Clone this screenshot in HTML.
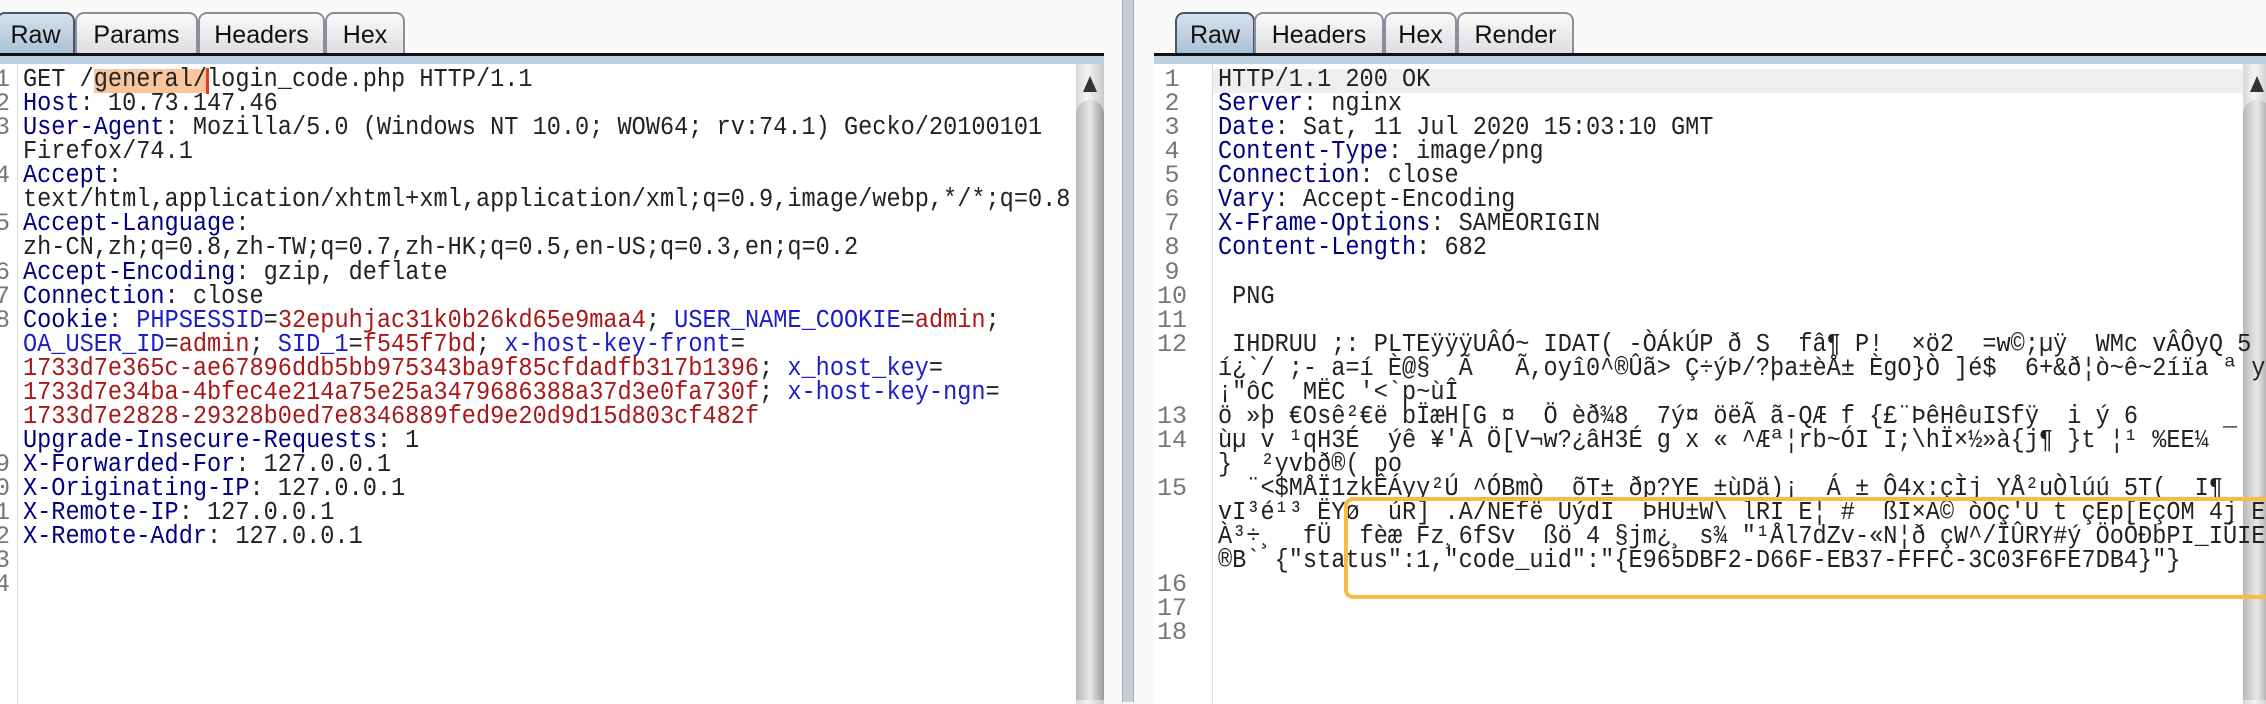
<!DOCTYPE html>
<html><head><meta charset="utf-8"><style>
html,body{margin:0;padding:0}
body{width:2266px;height:702px;background:#fafafa;position:relative;overflow:hidden;font-family:"Liberation Sans",sans-serif}
.tab{position:absolute;top:12px;height:42px;border:2px solid #8a8f99;border-bottom:none;border-radius:9px 9px 0 0;background:linear-gradient(#fafafa,#dcdde0);font-size:25px;line-height:42px;text-align:center;color:#111;box-sizing:border-box}
.tab.sel{background:linear-gradient(#d6e2ee,#a8bed3);border-color:#4b5563;height:44px}
.bar{position:absolute;top:53px;height:3px;background:#111}
.strip{position:absolute;top:56px;height:8px;background:#bccfe3}
.ed{position:absolute;top:64px;height:640px;background:#fff}
.code{position:absolute;font-family:"Liberation Mono",monospace;font-size:25.5px;line-height:24.06px;white-space:pre;color:#222;transform:scaleX(0.925);transform-origin:0 0}
.n{color:#000080}.k{color:#1c1cc8}.v{color:#a81818}
.num{position:absolute;font-family:"Liberation Mono",monospace;font-size:25px;line-height:24.06px;white-space:pre;color:#777;text-align:right}
.sb{position:absolute;top:64px;width:28px;height:640px;background:linear-gradient(90deg,#d8d8d8,#f4f4f4 40%,#c8c8c8)}
.sb:before{content:"";position:absolute;left:7px;top:12px;border-left:7px solid transparent;border-right:7px solid transparent;border-bottom:16px solid #333}
.sb:after{content:"";position:absolute;left:0;top:36px;width:28px;height:600px;background:linear-gradient(90deg,#b8b8b8,#e8e8e8 50%,#9a9a9a);border-radius:14px 14px 0 0}
</style></head><body>
<!-- left panel -->
<div class="ed" style="left:0;width:1104px"></div>
<div style="position:absolute;left:17px;top:64px;width:1px;height:640px;background:#ddd"></div>
<div class="tab sel" style="left:-4px;width:79px">Raw</div>
<div class="tab" style="left:75px;width:123px">Params</div>
<div class="tab" style="left:198px;width:127px">Headers</div>
<div class="tab" style="left:325px;width:80px">Hex</div>
<div class="bar" style="left:0;width:1104px"></div>
<div class="strip" style="left:0;width:1104px"></div>
<div class="sb" style="left:1076px"></div>
<div class="num" style="left:-40px;top:68px;width:50px">1
2
3

4

5

6
7
8





9
10
11
12
13
14</div>
<div style="position:absolute;left:94px;top:69px;width:113px;height:24px;background:#f9c59c"></div>
<div style="position:absolute;left:206px;top:68px;width:3px;height:26px;background:#e04020"></div>
<div class="code" style="left:23px;top:68px">GET /general/login_code.php HTTP/1.1
<span class="n">Host</span>: 10.73.147.46
<span class="n">User-Agent</span>: Mozilla/5.0 (Windows NT 10.0; WOW64; rv:74.1) Gecko/20100101
Firefox/74.1
<span class="n">Accept</span>:
text/html,application/xhtml+xml,application/xml;q=0.9,image/webp,*/*;q=0.8
<span class="n">Accept-Language</span>:
zh-CN,zh;q=0.8,zh-TW;q=0.7,zh-HK;q=0.5,en-US;q=0.3,en;q=0.2
<span class="n">Accept-Encoding</span>: gzip, deflate
<span class="n">Connection</span>: close
<span class="n">Cookie</span>: <span class="k">PHPSESSID</span>=<span class="v">32epuhjac31k0b26kd65e9maa4</span>; <span class="k">USER_NAME_COOKIE</span>=<span class="v">admin</span>;
<span class="k">OA_USER_ID</span>=<span class="v">admin</span>; <span class="k">SID_1</span>=<span class="v">f545f7bd</span>; <span class="k">x-host-key-front</span>=
<span class="v">1733d7e365c-ae67896ddb5bb975343ba9f85cfdadfb317b1396</span>; <span class="k">x_host_key</span>=
<span class="v">1733d7e34ba-4bfec4e214a75e25a3479686388a37d3e0fa730f</span>; <span class="k">x-host-key-ngn</span>=
<span class="v">1733d7e2828-29328b0ed7e8346889fed9e20d9d15d803cf482f</span>
<span class="n">Upgrade-Insecure-Requests</span>: 1
<span class="n">X-Forwarded-For</span>: 127.0.0.1
<span class="n">X-Originating-IP</span>: 127.0.0.1
<span class="n">X-Remote-IP</span>: 127.0.0.1
<span class="n">X-Remote-Addr</span>: 127.0.0.1</div>
<!-- separator -->
<div style="position:absolute;left:1122px;top:0;width:10px;height:702px;background:#c9ced6;border-left:1px solid #aab;border-right:1px solid #aab"></div>
<!-- right panel -->
<div class="ed" style="left:1154px;width:1112px"></div>
<div style="position:absolute;left:1212px;top:64px;width:1px;height:640px;background:#ddd"></div>
<div style="position:absolute;left:1213px;top:69px;width:1030px;height:24px;background:#efefef"></div>
<div class="tab sel" style="left:1175px;width:80px">Raw</div>
<div class="tab" style="left:1254px;width:130px">Headers</div>
<div class="tab" style="left:1384px;width:73px">Hex</div>
<div class="tab" style="left:1457px;width:117px">Render</div>
<div class="bar" style="left:1154px;width:1112px"></div>
<div class="strip" style="left:1154px;width:1112px"></div>
<div class="sb" style="left:2243px"></div>
<div class="num" style="left:1150px;top:68px;width:44px;text-align:center">1
2
3
4
5
6
7
8
9
10
11
12


13
14

15



16
17
18</div>
<div class="code" style="left:1218px;top:68px">HTTP/1.1 200 OK
<span class="n">Server</span>: nginx
<span class="n">Date</span>: Sat, 11 Jul 2020 15:03:10 GMT
<span class="n">Content-Type</span>: image/png
<span class="n">Connection</span>: close
<span class="n">Vary</span>: Accept-Encoding
<span class="n">X-Frame-Options</span>: SAMEORIGIN
<span class="n">Content-Length</span>: 682

 PNG

 IHDRUU ;: PLTEÿÿÿUÂÓ~ IDAT( -ÒÁkÚP ð S  fâ¶ P!  ×ö2  =w©;µÿ  WMc vÂÔyQ 5 z
í¿`/ ;- a=í È@§  Ã   Ã,oyî0^®Ûã> Ç÷ýÞ/?þa±èÅ± ÈgO}Ò ]é$  6+&ð¦ò~ê~2íïa ª yºÓÛ:
¡"ôC  MËC '<`p~ùÎ
ö »þ €Osê²€ë bÏæH[G ¤  Ö èð¾8  7ý¤ öëÃ ã-QÆ f {£¨ÞêHêuISfÿ  i ý 6
ùµ v ¹qH3É  ýê ¥'A Ö[V¬w?¿âH3É g x « ^Æª¦rb~ÓI I;\hÏ×½»à{j¶ }t ¦¹ %EE¼ ¯  µï
}  ²yvbð®( po
  ¨<$MÅÏ1zkÊÁyy²Ú ^ÓBmÒ  õT± ðp?YE ±ùDä)¡  Á ± Ô4x:çÌj YÅ²uÒlúú 5T(  I¶    á
vI³é¹³ ËYø  úR] .Ä/NÈfë ÙýdÏ  ÞHÜ±W\ lRÎ Ë¦ #  ßÌ×Â© òÔç'Ü t çÊp[ÈçÓM 4j E; <
À³÷¸  fÜ  fèæ Fz¸6fSv  ßö 4 §jm¿¸ s¾ "¹Ål7dZv-«N¦ð çW^/ÏÛRY#ý ÖoÒÐbPI_IÚIEND
®B` {"status":1,"code_uid":"{E965DBF2-D66F-EB37-FFFC-3C03F6FE7DB4}"}</div>
<div style="position:absolute;left:1344px;top:497px;width:940px;height:94px;border:4px solid #f6bd42;border-radius:9px"></div>
</body></html>
